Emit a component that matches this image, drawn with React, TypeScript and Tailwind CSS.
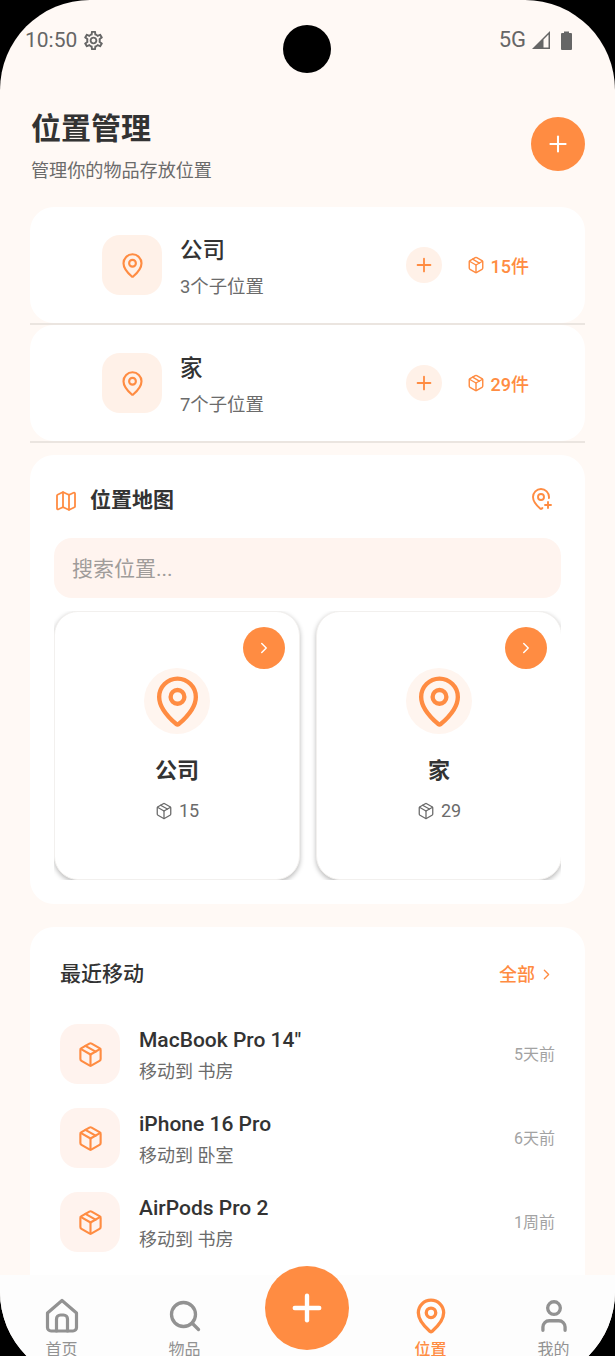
import React from "react";
import { Plus, MapPin, Package, Map, MapPinPlus, ChevronRight, Search, User } from "lucide-react";
import { MdOutlineSettings } from "react-icons/md";

function Chip({ name, sub, count }: { name: string; sub: string; count: string }) {
  return (
    <div className="flex h-[118px] flex-col">
      <div className="flex h-[116px] items-center rounded-[24px] bg-white pl-[72px] pr-[56px]">
        <div className="flex h-[60px] w-[60px] items-center justify-center rounded-[18px] bg-[#fff1e8]">
          <MapPin size={27} strokeWidth={1.9} className="text-[#ff8c42]" />
        </div>
        <div className="ml-[18px] flex-1">
          <div className="mt-[4px] text-[22.5px] leading-[30px] font-medium text-[#333333]">{name}</div>
          <div className="mt-[10px] text-[18.4px] leading-[24px] text-[#6b6b6b]">{sub}</div>
        </div>
        <div className="flex h-9 w-9 items-center justify-center rounded-full bg-[#fff1e8]">
          <Plus size={22} strokeWidth={2} className="text-[#ff8c42]" />
        </div>
        <Package size={18} strokeWidth={1.9} className="ml-[25px] text-[#ff8c42]" />
        <span className="ml-[6px] mt-[2px] text-[18px] font-medium text-[#ff8c42]">{count}</span>
      </div>
      <div className="h-[2px] bg-[#ebe5e0]" />
    </div>
  );
}

function MapCard({ name, count }: { name: string; count: string }) {
  return (
    <div className="relative flex h-[269px] w-[246px] shrink-0 flex-col items-center rounded-[24px] border border-[#f2f0ee] bg-white shadow-[0_2px_5px_rgba(0,0,0,0.28)]">
      <div className="absolute right-[14px] top-[15px] flex h-[42px] w-[42px] items-center justify-center rounded-full bg-[#ff8c42]">
        <ChevronRight size={18} strokeWidth={1.9} className="text-white" />
      </div>
      <div className="mt-[56px] flex h-[66px] w-[66px] items-center justify-center rounded-full bg-[#fff5ef]">
        <MapPin size={55} strokeWidth={1.9} className="text-[#ff8c42]" />
      </div>
      <div className="mt-[22px] text-[22px] leading-[30px] font-bold text-[#333333]">{name}</div>
      <div className="mt-[13px] flex items-center gap-[6px] text-[18px] leading-[24px] text-[#6b6b6b]">
        <Package size={18} strokeWidth={1.7} />
        <span>{count}</span>
      </div>
    </div>
  );
}

function Move({ name, to, time }: { name: string; to: string; time: string }) {
  return (
    <div className="flex h-[60px] items-center">
      <div className="flex h-[60px] w-[60px] items-center justify-center rounded-[18px] bg-[#fff3ee]">
        <Package size={27} strokeWidth={1.9} className="text-[#ff8c42]" />
      </div>
      <div className="ml-[19px] flex-1">
        <div className="mt-[2px] text-[21px] leading-[28px] font-medium text-[#333333]">{name}</div>
        <div className="mt-[6px] text-[18px] leading-[24px] text-[#6b6b6b]">{to}</div>
      </div>
      <div className="mt-[1px] text-[16px] text-[#a3a3a3]">{time}</div>
    </div>
  );
}

function NavItem({ label, active, children }: { label: string; active?: boolean; children?: React.ReactNode }) {
  return (
    <div className={`flex w-[123px] flex-col items-center ${active ? "text-[#ff8c42]" : "text-[#929292]"}`}>
      <div className="flex h-[36px] items-center justify-center">{children}</div>
      <div className={`mt-[8px] text-[16px] leading-[15px] ${active ? "font-medium" : ""}`}>{label}</div>
    </div>
  );
}

export default function App() {
  return (
    <div
      className="relative h-[1356px] w-[615px] overflow-hidden bg-black"
      style={{ fontFamily: 'Roboto, "Noto Sans CJK SC", sans-serif' }}
    >
      <div className="relative flex h-[1382px] w-[615px] flex-col overflow-hidden rounded-[90px] bg-[#fff9f5]">
        <div className="flex h-[80px] shrink-0 items-start justify-between pl-[25px] pr-[43px] pt-[26px] text-[#666666]">
          <div className="flex items-center gap-[5px]">
            <span className="text-[21px] leading-[28px]">10:50</span>
            <MdOutlineSettings size={23} />
          </div>
          <div className="flex items-center">
            <span className="text-[22px] leading-[28px]">5G</span>
            <svg className="ml-[6px]" width="18" height="18" viewBox="0 0 18 18">
              <path d="M18 0v18H0z M16.5 3.6 11.5 8.6v7.9h5z" fill="#666666" fillRule="evenodd" />
            </svg>
            <svg className="ml-[11px]" width="11" height="19" viewBox="0 0 11 19">
              <path d="M3 2V0.5h5V2h2a1 1 0 0 1 1 1v15a1 1 0 0 1-1 1H1a1 1 0 0 1-1-1V3a1 1 0 0 1 1-1z" fill="#666666" />
            </svg>
          </div>
        </div>
        <div className="absolute left-[283px] top-[25px] h-12 w-12 rounded-full bg-black" />

        <div className="flex min-h-0 flex-1 flex-col overflow-hidden px-[30px]">
          <div className="flex h-[127px] shrink-0 items-start justify-between pl-[1px] pt-[28px]">
            <div>
              <div className="text-[30px] leading-[42px] font-bold text-[#333333]">位置管理</div>
              <div className="mt-[8px] text-[18.1px] leading-[26px] text-[#6b6b6b]">管理你的物品存放位置</div>
            </div>
            <div className="mt-[9px] flex h-[54px] w-[54px] items-center justify-center rounded-full bg-[#ff8c42]">
              <Plus size={26} strokeWidth={1.9} className="text-white" />
            </div>
          </div>

          <Chip name="公司" sub="3个子位置" count="15件" />
          <Chip name="家" sub="7个子位置" count="29件" />

          <div className="mt-[12px] h-[449px] shrink-0 rounded-[24px] bg-white px-[24px]">
            <div className="flex h-[83px] items-center pt-[8px]">
              <Map size={24} strokeWidth={1.8} className="text-[#ff8c42]" />
              <span className="ml-[12px] flex-1 text-[21px] font-bold text-[#333333]">位置地图</span>
              <MapPinPlus size={24} strokeWidth={1.9} className="mr-[8px] -mt-[4px] text-[#ff8c42]" />
            </div>
            <div className="flex h-[60px] items-center rounded-[18px] bg-[#fff4ef] px-[18px] pt-[3px] text-[21px] text-[#a09c9a]">搜索位置...</div>
            <div className="mt-[13px] flex h-[269px] gap-[16px] overflow-hidden">
              <MapCard name="公司" count="15" />
              <MapCard name="家" count="29" />
            </div>
          </div>

          <div className="mt-[23px] flex-1 rounded-t-[24px] bg-white px-[30px]">
            <div className="flex h-[94px] items-center pt-[1px]">
              <span className="flex-1 text-[21px] font-medium text-[#333333]">最近移动</span>
              <span className="text-[18px] font-medium text-[#ff8c42]">全部</span>
              <ChevronRight size={17} strokeWidth={1.9} className="ml-[3px] text-[#ff8c42]" />
            </div>
            <div className="mt-[3px] flex flex-col gap-[24px]">
              <Move name={'MacBook Pro 14"'} to="移动到 书房" time="5天前" />
              <Move name="iPhone 16 Pro" to="移动到 卧室" time="6天前" />
              <Move name="AirPods Pro 2" to="移动到 书房" time="1周前" />
            </div>
          </div>
        </div>

        <div className="relative flex h-[107px] shrink-0 bg-[#fdfdfd] pt-[23px]">
          <NavItem label="首页">
            <svg width="36" height="36" viewBox="0 0 36 36" fill="none" stroke="currentColor" strokeWidth="3.2" strokeLinejoin="round" strokeLinecap="round">
              <path d="M3.5 15 18 2.5 32.5 15v14.5a3.5 3.5 0 0 1-3.5 3.5H7a3.5 3.5 0 0 1-3.5-3.5z" />
              <path d="M12.5 33V21a4 4 0 0 1 4-4h3a4 4 0 0 1 4 4v12" />
            </svg>
          </NavItem>
          <NavItem label="物品"><Search size={36} strokeWidth={2.2} /></NavItem>
          <div className="w-[123px]" />
          <NavItem label="位置" active><MapPin size={38} strokeWidth={2.1} /></NavItem>
          <NavItem label="我的"><User size={38} strokeWidth={2.1} /></NavItem>
          <div className="absolute left-[265px] top-[-9px] flex h-[84px] w-[84px] items-center justify-center rounded-full bg-[#ff8c42]">
            <Plus size={42} strokeWidth={2.5} className="text-white" />
          </div>
        </div>
      </div>
    </div>
  );
}
